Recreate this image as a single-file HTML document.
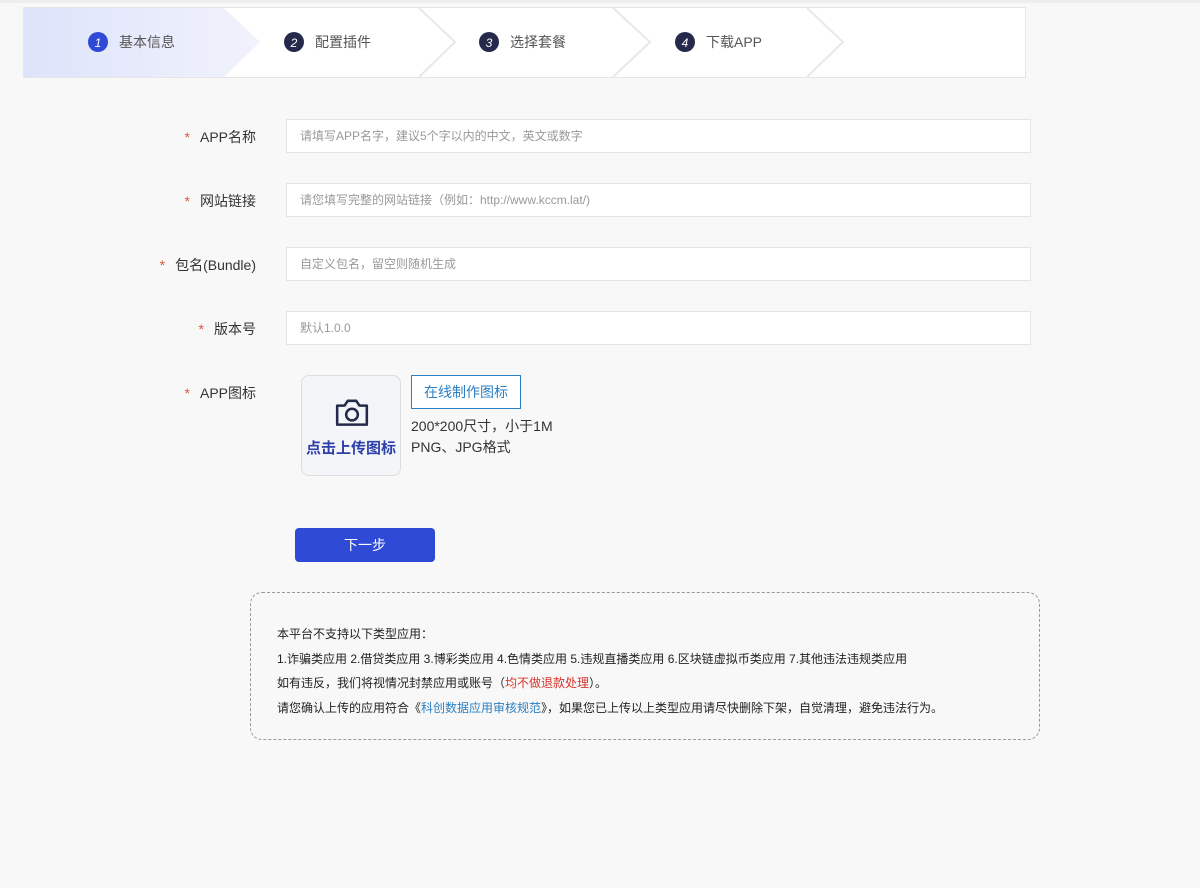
<!DOCTYPE html>
<html><head><meta charset="utf-8">
<style>
*{margin:0;padding:0;box-sizing:border-box}
body{width:1200px;height:888px;background:#f8f8f8;font-family:"Liberation Sans","Noto Sans CJK SC",sans-serif;position:relative;overflow:hidden;color:#333}
.top{position:absolute;left:0;top:0;width:1200px;height:3px;background:#eee}
.lbl{position:absolute;right:944px;font-size:14px;color:#333;white-space:nowrap}
.lbl b{color:#e0533d;font-weight:normal;margin-right:10px}
.inp{position:absolute;left:286px;width:745px;height:34px;background:#fff;border:1px solid #e4e4e4;font-size:12px;color:#999;padding-left:13px;line-height:32px}
.up{position:absolute;left:301px;top:375px;width:100px;height:101px;border:1px solid #ddd;border-radius:8px;background:#f4f5f9}
.up span{position:absolute;left:0;width:100%;top:61px;text-align:center;font-size:15px;font-weight:bold;color:#2d3fa8;white-space:nowrap}
.btn2{position:absolute;left:411px;top:375px;width:110px;height:34px;border:1px solid #2b7fc3;color:#2b7fc3;font-size:14px;text-align:center;line-height:32px;background:#fff}
.tip{position:absolute;left:411px;font-size:14px;color:#333}
.next{position:absolute;left:295px;top:528px;width:140px;height:34px;background:#2f4bd6;border-radius:4px;color:#fff;font-size:14px;text-align:center;line-height:34px}
.note{position:absolute;left:250px;top:592px;width:790px;height:148px;border:1px dashed #999;border-radius:12px;padding:29px 0 0 26px;font-size:12px;color:#222;line-height:24.5px}
</style></head><body>
<div class="top"></div>
<svg style="position:absolute;left:0;top:0" width="1200" height="90">
<defs><linearGradient id="g" x1="0" x2="1"><stop offset="0" stop-color="#dde3fa"/><stop offset="1" stop-color="#f1f2fc"/></linearGradient></defs>
<rect x="23.5" y="7.5" width="1002" height="70" fill="#fff" stroke="#e6e6e6"/>
<polygon points="24,8 224,8 260,42 224,77 24,77" fill="url(#g)"/>
<polyline points="419,8 455,42 419,77" fill="none" stroke="#e8e8e8" stroke-width="2"/>
<polyline points="613,8 650,42 613,77" fill="none" stroke="#e8e8e8" stroke-width="2"/>
<polyline points="807,8 843,42 807,77" fill="none" stroke="#e8e8e8" stroke-width="2"/>
<g font-family="Liberation Sans, Noto Sans CJK SC, sans-serif" font-size="14">
<circle cx="98" cy="42" r="10" fill="#2f4bd6"/><text x="98" y="47" fill="#fff" font-size="12" text-anchor="middle" font-style="italic">1</text><text x="119" y="47" fill="#555">基本信息</text>
<circle cx="294" cy="42" r="10" fill="#252a4a"/><text x="294" y="47" fill="#fff" font-size="12" text-anchor="middle" font-style="italic">2</text><text x="315" y="47" fill="#555">配置插件</text>
<circle cx="489" cy="42" r="10" fill="#252a4a"/><text x="489" y="47" fill="#fff" font-size="12" text-anchor="middle" font-style="italic">3</text><text x="510" y="47" fill="#555">选择套餐</text>
<circle cx="685" cy="42" r="10" fill="#252a4a"/><text x="685" y="47" fill="#fff" font-size="12" text-anchor="middle" font-style="italic">4</text><text x="706" y="47" fill="#555">下载APP</text>
</g></svg>

<div class="lbl" style="top:127px"><b>*</b>APP名称</div>
<div class="inp" style="top:119px">请填写APP名字，建议5个字以内的中文，英文或数字</div>
<div class="lbl" style="top:191px"><b>*</b>网站链接</div>
<div class="inp" style="top:183px">请您填写完整的网站链接（例如：http://www.kccm.lat/)</div>
<div class="lbl" style="top:255px"><b>*</b>包名(Bundle)</div>
<div class="inp" style="top:247px">自定义包名，留空则随机生成</div>
<div class="lbl" style="top:319px"><b>*</b>版本号</div>
<div class="inp" style="top:311px">默认1.0.0</div>
<div class="lbl" style="top:383px"><b>*</b>APP图标</div>

<div class="up">
<svg style="position:absolute;left:32px;top:21px" width="36" height="32" viewBox="0 0 34 30"><path d="M3 8h7l3-4.5h8l3 4.5h7v18H3z" fill="none" stroke="#252a4a" stroke-width="2.4" stroke-linejoin="round"/><circle cx="17" cy="16.5" r="5.5" fill="none" stroke="#252a4a" stroke-width="2.4"/></svg>
<span>点击上传图标</span></div>
<div class="btn2">在线制作图标</div>
<div class="tip" style="top:416px">200*200尺寸，小于1M</div>
<div class="tip" style="top:437px">PNG、JPG格式</div>
<div class="next">下一步</div>

<div class="note">
本平台不支持以下类型应用：<br>
1.诈骗类应用 2.借贷类应用 3.博彩类应用 4.色情类应用 5.违规直播类应用 6.区块链虚拟币类应用 7.其他违法违规类应用<br>
如有违反，我们将视情况封禁应用或账号（<span style="color:#d9342b">均不做退款处理</span>）。<br>
请您确认上传的应用符合《<span style="color:#2b7fc3">科创数据应用审核规范</span>》，如果您已上传以上类型应用请尽快删除下架，自觉清理，避免违法行为。
</div>
</body></html>
